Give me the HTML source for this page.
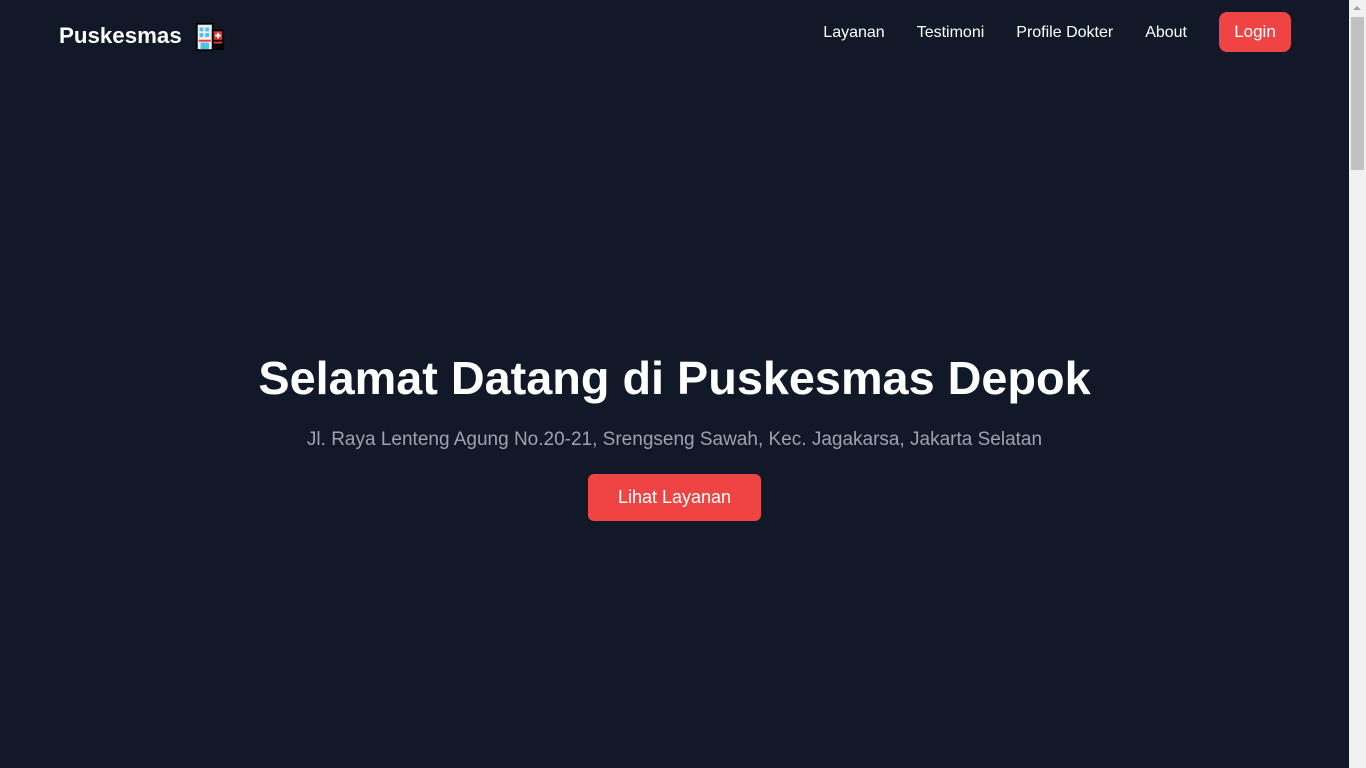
<!DOCTYPE html>
<html><head><meta charset="utf-8"><style>
*{margin:0;padding:0;box-sizing:border-box}
html,body{width:1366px;height:768px;overflow:hidden;background:#111827;font-family:"Liberation Sans",sans-serif;color:#fff}
.sb{position:absolute;right:0;top:0;width:17px;height:768px;background:#f1f1f1}
.sb .th{position:absolute;left:2px;top:17px;width:13px;height:153px;background:#c1c1c1}
.sb .ar{position:absolute;left:4px;top:6px;width:0;height:0;border-left:4px solid transparent;border-right:4px solid transparent;border-bottom:4px solid #a3a3a3}
.logo{position:absolute;left:59px;top:20px;font-size:22.3px;font-weight:bold;display:flex;align-items:center}
.logo svg{margin-left:11px}
.nav{position:absolute;top:12px;right:75px;display:flex;align-items:center;font-size:16px}
.nav a{color:#fff;text-decoration:none;margin-right:32px;position:relative;top:1px}
.nav .login{background:#ef4444;border-radius:8px;width:72px;height:40px;display:flex;align-items:center;justify-content:center;margin-right:0;font-size:17px;top:0}
h1{position:absolute;top:351px;left:0;width:1349px;text-align:center;font-size:46.8px;font-weight:bold}
p{position:absolute;top:429px;left:0;width:1349px;text-align:center;font-size:19px;color:#9ca3af}
.btn{position:absolute;left:588px;top:474px;width:173px;height:47px;background:#ef4444;border-radius:6px;display:flex;align-items:center;justify-content:center;font-size:18px}
</style></head><body>
<div class="logo">Puskesmas
<svg width="32" height="32" viewBox="0 0 34 34"><rect x="3" y="3" width="19" height="30" fill="#000"/><rect x="5" y="5" width="15" height="26" fill="#eee"/><rect x="7" y="8" width="4" height="4" fill="#4cc3ea"/><rect x="13" y="8" width="4" height="4" fill="#4cc3ea"/><rect x="7" y="14" width="4" height="4" fill="#4cc3ea"/><rect x="13" y="14" width="4" height="4" fill="#4cc3ea"/><rect x="6" y="21" width="13" height="2" fill="#e33"/><rect x="8" y="24" width="9" height="7" fill="#4cc3ea"/><rect x="20" y="10" width="13" height="22" fill="#000"/><rect x="22" y="12" width="9" height="9" fill="#e33"/><rect x="25.5" y="13.5" width="2" height="6" fill="#fff"/><rect x="23.5" y="15.5" width="6" height="2" fill="#fff"/><rect x="22" y="23" width="9" height="2" fill="#e33"/></svg></div>
<div class="nav"><a>Layanan</a><a>Testimoni</a><a>Profile Dokter</a><a>About</a><a class="login">Login</a></div>
<h1>Selamat Datang di Puskesmas Depok</h1>
<p>Jl. Raya Lenteng Agung No.20-21, Srengseng Sawah, Kec. Jagakarsa, Jakarta Selatan</p>
<div class="btn">Lihat Layanan</div>
<div class="sb"><div class="ar"></div><div class="th"></div></div>
</body></html>
